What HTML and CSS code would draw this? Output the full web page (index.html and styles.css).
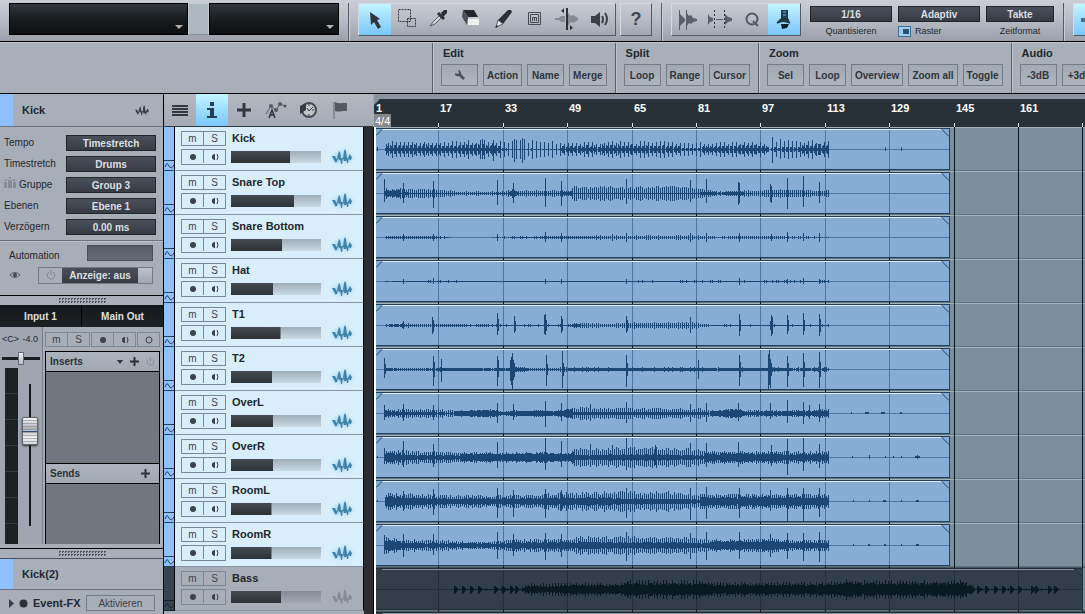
FILE: index.html
```html
<!DOCTYPE html>
<html lang="de">
<head>
    <meta charset="UTF-8">
    <meta name="viewport" content="width=device-width, initial-scale=1.0">
    <title>Kick</title>
    <link rel="stylesheet" href="styles.css">
</head>
<body>
    <!-- Shared icons -->
    <svg class="symbols" width="0" height="0">
        <symbol id="i-wave" viewBox="0 0 20 16">
            <path d="M0 7h3l1 2 1 3-1 2-2-3zM5 9l1-4 1-3 1 1 1 5-1 3H7L6 9l-1 4-1-1zM8 9h3l-1 6H9zM11 9l1-7 1-2 1 2 1 7-1 3h-2zM14 9h3l-1 5h-1zM17 7l1-2 1 2 1 1-1 3h-1l-2-2z" fill="currentColor"/>
        </symbol>
        <symbol id="i-rec" viewBox="0 0 12 10"><circle cx="6" cy="5" r="3" fill="currentColor"/></symbol>
        <symbol id="i-mon" viewBox="0 0 12 10">
            <path d="M6 2v6H5L3 6.500v-3L5 2z" fill="currentColor"/>
            <path d="M8 2q2 3 0 6" fill="none" stroke="currentColor"/>
        </symbol>
        <symbol id="i-power" viewBox="0 0 10 10">
            <path d="M3 2.200a3.700 3.700 0 1 0 4 0M5 0v5" fill="none" stroke="currentColor"/>
        </symbol>
        <symbol id="i-plus" viewBox="0 0 14 14"><path d="M5.500 0h3v5.500H14v3H8.500V14h-3V8.500H0v-3h5.500z" fill="currentColor"/></symbol>
        <symbol id="i-env" viewBox="0 0 10 9"><path d="M1 6q2-6 4-1 2 4 5-1" fill="none" stroke="currentColor"/></symbol>
    </svg>

    <header class="toolbar">
        <div class="display display-wide"><select aria-label="Parameter"></select></div>
        <div class="display-link"></div>
        <div class="display"><select aria-label="Wert"></select></div>
        <div class="separator"></div>

        <div class="tools">
            <button class="tool active" aria-label="Pfeil">
                <svg width="32" height="31"><path d="M11 8l1 13 3-3 4 7 3-2-4-7 3-1z" fill="#303439"/></svg>
            </button>
            <button class="tool" aria-label="Bereich">
                <svg width="32" height="31" fill="none" stroke="#303439" stroke-dasharray="2 1"><path d="M7.500 5.500h12v12h-12zM16.500 14.500h8v8h-8z"/></svg>
            </button>
            <button class="tool" aria-label="Trennen">
                <svg width="32" height="31"><path d="M18 9l3-3h3v3l-4 4z" fill="#2c3034"/><path d="M15 9l6 6" stroke="#2c3034" stroke-width="3"/><path d="M16 12l-6 6-3 4 5-2 6-6z" fill="#d5d8dd" stroke="#555b62"/></svg>
            </button>
            <button class="tool" aria-label="Radiergummi">
                <svg width="32" height="31"><path d="M8 6h11l4 7H13z" fill="#23272b"/><path d="M8 6l5 7-1 8-5-8z" fill="#4a4f55"/><path d="M13 15h11v6H13z" fill="#f0f0ef"/><path d="M13 15l2-2h8l1 2z" fill="#c8cbcf"/></svg>
            </button>
            <button class="tool" aria-label="Stift">
                <svg width="32" height="31"><path d="M11 16L21 6h3l1 2-9 12z" fill="#2d3136"/><path d="M11 16l5 4-7 3z" fill="#e4e6e9" stroke="#555b61"/><path d="M8 24l3-1-1-2z" fill="#222"/></svg>
            </button>
            <button class="tool" aria-label="Mute">
                <svg width="32" height="31" fill="none" stroke="#464c54"><path d="M9.500 8.500h12v12h-12zM11.500 10.500h8v8h-8z"/><path d="M13.500 17v-3.500h4V17M15.500 14v3"/></svg>
            </button>
            <button class="tool" aria-label="Bend">
                <svg width="32" height="31"><path d="M4 14h4l2-2h4v6h-4l-2-2H4z" fill="#868c94"/><path d="M17 9l3 3 2-1 5 3v2l-5 3-2-1-3 4z" fill="#868c94"/><path d="M15 4h2v22h-2z" fill="#2d3136"/><path d="M13 4v5l-3-2zM19 21v5l3-2z" fill="#2d3136"/></svg>
            </button>
            <button class="tool" aria-label="Hören">
                <svg width="32" height="31"><path d="M8 12h4l5-4v15l-5-4H8z" fill="#3b4047"/><path d="M19 12q2 3 0 7M22 9q4 6 0 12" fill="none" stroke="#3b4047" stroke-width="2"/></svg>
            </button>
        </div>
        <button class="tool-help">?</button>
        <div class="separator"></div>

        <div class="tools">
            <button class="tool" aria-label="Transienten">
                <svg width="32" height="31"><path d="M8 10l5 5v2l-5 5zM15 9l2 3 2-1 2 3 4 1v2l-4 1-2 2-2-1-2 3z" fill="#596069"/><path d="M7.500 6v20M14.500 6v20" stroke="#596069"/></svg>
            </button>
            <button class="tool" aria-label="Auto-Crossfade">
                <svg width="32" height="31"><path d="M4 10l2 3 3 1v3l-3 1-2 3zM12 15h7v1h-7zM21 10l3 3 4 1v3l-4 1-3 3z" fill="#596069"/><path d="M10.500 6v20M20.500 6v20" stroke="#303439" stroke-dasharray="2 2"/></svg>
            </button>
            <button class="tool" aria-label="Quantisierung">
                <svg width="32" height="31" fill="none" stroke="#555b63" stroke-width="2"><circle cx="16" cy="15" r="5.500"/><path d="M17 17l5 5"/></svg>
            </button>
            <button class="tool active" aria-label="Autoscroll">
                <svg width="32" height="31"><path d="M13 6h7v8h-7z" fill="#1c3d57"/><path d="M15 8h3M15 11h3" stroke="#79bbdf"/><path d="M9 18l4-4h7l2 4-6-2z" fill="#234"/><path d="M9 19q6-4 13 0" stroke="#234" fill="none" stroke-width="2"/><path d="M13 20h8l-2 4-5 1z" fill="#0e1e2d"/></svg>
            </button>
        </div>

        <div class="field field-first">
            <select id="quant"><option>1/16</option></select>
            <label for="quant">Quantisieren</label>
        </div>
        <div class="field">
            <select aria-label="Rastermodus"><option>Adaptiv</option></select>
            <label class="snap"><input type="checkbox" checked>Raster</label>
        </div>
        <div class="field field-small">
            <select id="format"><option>Takte</option></select>
            <label for="format">Zeitformat</label>
        </div>
        <div class="separator"></div>
        <div class="tools">
            <button class="tool active" aria-label="Start">
                <svg width="32" height="31"><path d="M7 14h20v4H7z" fill="#47708c"/></svg>
            </button>
        </div>
    </header>

    <div class="macros">
        <div class="macro-blank"></div>
        <section class="macro">
            <h2>Edit</h2>
            <div class="macro-buttons">
                <button aria-label="Setup"><svg width="12" height="12"><path d="M4 1l1 3-1 1-3-1q0 4 4 3l4 4 2-2-4-4q0-4-3-4z" fill="#4a5058"/></svg></button>
                <button>Action</button>
                <button>Name</button>
                <button>Merge</button>
            </div>
        </section>
        <section class="macro">
            <h2>Split</h2>
            <div class="macro-buttons">
                <button>Loop</button>
                <button>Range</button>
                <button>Cursor</button>
            </div>
        </section>
        <section class="macro">
            <h2>Zoom</h2>
            <div class="macro-buttons">
                <button>Sel</button>
                <button>Loop</button>
                <button>Overview</button>
                <button>Zoom all</button>
                <button>Toggle</button>
            </div>
        </section>
        <section class="macro">
            <h2>Audio</h2>
            <div class="macro-buttons">
                <button>-3dB</button>
                <button>+3dB</button>
            </div>
        </section>
    </div>

    <main class="workspace">
        <aside class="inspector">
            <div class="ins-title">
                <span class="swatch"></span>
                <h1>Kick</h1>
                <svg class="ins-wave" width="14" height="11"><use href="#i-wave"/></svg>
            </div>

            <div class="params">
                <label for="tempo">Tempo</label>
                <select id="tempo"><option>Timestretch</option></select>
                <label for="stretch">Timestretch</label>
                <select id="stretch"><option>Drums</option></select>
                <label for="group"><svg width="12" height="11" fill="#858c96"><path d="M0 5h3v6H0zM4 3h4v8H4zM9 5h3v6H9zM1 2h2v2H1zM5 0h2v2H5zM9 2h2v2H9z"/></svg> Gruppe</label>
                <select id="group"><option>Group 3</option></select>
                <label for="layer">Ebenen</label>
                <select id="layer"><option>Ebene 1</option></select>
                <label for="delay">Verzögern</label>
                <input id="delay" type="text" value="0.00 ms">
            </div>

            <div class="automation">
                <div class="auto-row">
                    <label for="auto">Automation</label>
                    <select id="auto"></select>
                </div>
                <div class="auto-row">
                    <svg class="eye" width="12" height="8"><path d="M1 4q5-5 10 0q-5 5-10 0z" fill="none" stroke="#555b63"/><circle cx="6" cy="4" r="2" fill="#444a52"/></svg>
                    <div class="show">
                        <button class="show-power" aria-label="Automation an"><svg width="10" height="10"><use href="#i-power"/></svg></button>
                        <select aria-label="Anzeige"><option>Anzeige: aus</option></select>
                        <span class="show-end"></span>
                    </div>
                </div>
            </div>

            <div class="grip"></div>
            <div class="routing">
                <button>Input 1</button>
                <button>Main Out</button>
            </div>

            <div class="channel">
                <div class="strip">
                    <div class="levels"><span>&lt;C&gt;</span><span>-4.0</span></div>
                    <input class="pan" type="range" aria-label="Panorama">
                    <div class="fader-row">
                        <div class="meter"></div>
                        <input class="fader" type="range" aria-label="Pegel" value="71">
                    </div>
                </div>
                <div class="racks">
                    <div class="ch-buttons">
                        <div class="pair"><button>m</button><button>S</button></div>
                        <div class="pair">
                            <button aria-label="Aufnahme"><svg width="12" height="10"><use href="#i-rec"/></svg></button>
                            <button aria-label="Monitor"><svg width="12" height="10"><use href="#i-mon"/></svg></button>
                        </div>
                        <div class="pair">
                            <button aria-label="Mono"><svg width="10" height="10" fill="none" stroke="currentColor"><circle cx="5" cy="5" r="3"/></svg></button>
                        </div>
                    </div>
                    <div class="rack">
                        <div class="rack-head">
                            <h3>Inserts</h3>
                            <svg width="6" height="4"><path d="M0 0h6L3 4z" fill="#2c3138"/></svg>
                            <svg width="9" height="9"><use href="#i-plus"/></svg>
                            <svg class="dim" width="9" height="9"><use href="#i-power"/></svg>
                        </div>
                        <div class="rack-body rack-inserts"></div>
                        <div class="rack-head rack-sends">
                            <h3>Sends</h3>
                            <svg width="9" height="9"><use href="#i-plus"/></svg>
                        </div>
                        <div class="rack-body"></div>
                    </div>
                </div>
            </div>

            <div class="grip"></div>
            <div class="ins-title ins-event">
                <span class="swatch"></span>
                <h1>Kick(2)</h1>
            </div>
            <div class="event-fx">
                <svg width="5" height="9"><path d="M0 0l5 4.500L0 9z" fill="#363c44"/></svg>
                <svg width="9" height="9"><circle cx="4.500" cy="4.500" r="4" fill="#2d3239"/></svg>
                <h3>Event-FX</h3>
                <button>Aktivieren</button>
            </div>
        </aside>

        <div class="tracks">
            <div class="track-tools">
                <button aria-label="Spurliste"><svg width="16" height="11" fill="#34393f"><path d="M0 0h16v2H0zM0 3h16v2H0zM0 6h16v2H0zM0 9h16v2H0z"/></svg></button>
                <button class="active" aria-label="Inspektor"><svg width="10" height="16" fill="#263d50"><path d="M3 0h4v4H3zM0 6h7v8h3v2H0v-2h3V8H0z"/></svg></button>
                <button aria-label="Spur hinzufügen"><svg width="14" height="14" color="#34393f"><use href="#i-plus"/></svg></button>
                <button aria-label="Automation"><svg width="22" height="18"><path d="M1 13l5-8 5 4 4-6 5 2" fill="none" stroke="#555b63"/><circle cx="6" cy="5" r="2" fill="#555b63"/><circle cx="11" cy="9" r="2" fill="#555b63"/><circle cx="15" cy="3" r="2" fill="#555b63"/><circle cx="20" cy="5" r="1.500" fill="#555b63"/><path d="M4 17l3-8 3 8M5 14h4" fill="none" stroke="#30353b" stroke-width="1.500"/></svg></button>
                <button aria-label="Tempo"><svg width="18" height="18"><circle cx="10" cy="9" r="7" fill="#c3c7cc" stroke="#454a50" stroke-width="2"/><path d="M7 2L1 5v8l6-4z" fill="#353a40"/><path d="M10 3v2M10 13v2M15 9h-2M10 10l4-4M8 7l2 3" stroke="#353a40" fill="none"/></svg></button>
                <button aria-label="Marker"><svg width="14" height="18"><path d="M1 1v17" stroke="#868c93" stroke-width="2"/><path d="M2 1q4 2 7 1h5v8H9q-3 1-7 0z" fill="#555a61"/></svg></button>
            </div>
            <div id="trackList"></div>
        </div>

        <div class="gutter"></div>

        <div class="arrangement">
            <svg id="ruler" class="ruler"></svg>
            <div id="lanes" class="lanes"></div>
        </div>
    </main>

    <script src="script.js"></script>
</body>
</html>
```

FILE: styles.css
```css
* {
    box-sizing: border-box;
}

body {
    margin: 0;
    height: 100vh;
    display: flex;
    flex-direction: column;
    overflow: hidden;
    background: #a8aeb8;
    color: #22272d;
    font-family: Arial, "Liberation Sans", sans-serif;
    font-size: 10px;
}

h1, h2, h3 {
    margin: 0;
    font-size: 11px;
    line-height: 14px;
}

h3 {
    font-size: 10px;
}

button, select, input {
    margin: 0;
    padding: 0;
    border: 0;
    border-radius: 0;
    background: none;
    color: inherit;
    font: inherit;
    appearance: none;
}

button {
    display: flex;
    align-items: center;
    justify-content: center;
}

svg {
    display: block;
    flex: none;
}

.symbols {
    position: absolute;
}

/* Top toolbar */
.toolbar {
    display: flex;
    flex: none;
    height: 42px;
    padding: 3px 0 0 9px;
    border-bottom: 1px solid #000;
    background: linear-gradient(#cacdd5, #b9bdc7 45%, #9ba0aa);
}

.toolbar > * {
    flex: none;
}

.display {
    position: relative;
    width: 130px;
    height: 32px;
    border: 1px solid #000;
    background: linear-gradient(#32383d, #1b1f22 45%, #0d0f10);
}

.display-wide {
    width: 179px;
}

.display select {
    width: 100%;
    height: 100%;
}

.display::after {
    content: "";
    position: absolute;
    right: 4px;
    bottom: 5px;
    border: 4px solid transparent;
    border-top-color: #aeb2b5;
    border-bottom: 0;
}

.display-link {
    width: 21px;
    height: 32px;
    border: 1px solid #c6cad1;
    border-bottom-color: #888e97;
    background: #adb8c1;
}

.separator {
    width: 2px;
    height: 38px;
    margin: 0 8px 0 9px;
    border-left: 1px solid #595e66;
    border-right: 1px solid #c8ccd2;
}

.tools {
    display: flex;
    height: 33px;
    border: 1px solid #d6d9de;
    border-right-color: #555a62;
    border-bottom-color: #555a62;
}

.tool {
    width: 32px;
    height: 31px;
}

.tool.active,
.track-tools .active {
    background: linear-gradient(#c3f5ff, #9edcff 50%, #7bc6fc);
}

.tool-help {
    width: 32px;
    height: 33px;
    margin-left: 4px;
    border: 1px solid #d6d9de;
    border-right-color: #555a62;
    border-bottom-color: #555a62;
    color: #41464d;
    font-size: 18px;
    font-weight: bold;
}

.field {
    width: 82px;
    margin-left: 6px;
    padding-top: 3px;
    text-align: center;
}

.field-first {
    margin-left: 9px;
}

.field-small {
    width: 68px;
}

.field select,
.params select,
.params input,
.show select {
    display: block;
    width: 100%;
    height: 16px;
    border: 1px solid #22262b;
    background: linear-gradient(#4a505a, #363b44);
    color: #dcdfe2;
    font-weight: bold;
    text-align: center;
    text-align-last: center;
}

.field label {
    display: block;
    margin-top: 3px;
    font-size: 9px;
    line-height: 12px;
}

.field .snap {
    display: flex;
    align-items: center;
    gap: 4px;
}

.snap input {
    width: 13px;
    height: 11px;
    border: 1px solid #3d7195;
    background: linear-gradient(#275575, #275575) 4px 2px / 6px 5px no-repeat, #9dcdec;
}

/* Macro bar */
.macros {
    display: flex;
    flex: none;
    height: 52px;
    border-top: 1px solid #c3c7cf;
    border-bottom: 1px solid #000;
    background: #a8afb9;
}

.macro-blank {
    flex: 0 0 432px;
}

.macro {
    flex: none;
    padding: 3px 8px 0;
    border-left: 1px solid #595f68;
    box-shadow: inset 1px 0 #bfc4cb;
}

.macro h2 {
    padding-left: 2px;
}

.macro-buttons {
    display: flex;
    gap: 5px;
    margin-top: 4px;
}

.macro-buttons button {
    min-width: 37px;
    height: 22px;
    padding: 0 3px;
    border: 1px solid #757c86;
    background: linear-gradient(#a3a9b3, #afb5bf);
    color: #30353c;
    font-weight: bold;
}

/* Workspace */
.workspace {
    display: flex;
    flex: 1;
    min-height: 0;
}

.inspector {
    display: flex;
    flex: none;
    flex-direction: column;
    width: 164px;
    border-right: 1px solid #000;
}

.inspector > * {
    flex: none;
}

.ins-title {
    display: flex;
    align-items: center;
    height: 33px;
    border-bottom: 1px solid #6a717b;
    background: #a9afb9;
}

.swatch {
    width: 13px;
    height: 100%;
    margin-right: 9px;
    background: #90c1ff;
}

.ins-wave {
    margin-left: auto;
    margin-right: 14px;
    color: #363c44;
}

.params {
    display: grid;
    grid-template-columns: 1fr 90px;
    row-gap: 5px;
    align-items: center;
    padding: 8px 7px 5px 4px;
}

.params label {
    display: flex;
    gap: 3px;
    line-height: 16px;
}

.automation {
    height: 55px;
    padding: 4px 10px 0 9px;
    border-top: 1px solid #69707a;
    box-shadow: inset 0 1px #bcc1c8;
}

.auto-row {
    display: flex;
    align-items: center;
    justify-content: space-between;
    height: 20px;
}

.auto-row > select {
    width: 66px;
    height: 16px;
    margin-bottom: 4px;
    border: 1px solid #484e57;
    background: linear-gradient(#555b64, #666c76);
}

.show {
    display: flex;
    height: 17px;
    border: 1px solid #737a84;
}

.show-power {
    width: 23px;
    color: #7c838d;
}

.show select {
    width: 76px;
    height: 15px;
    border: 0;
}

.show-end {
    width: 14px;
    background: linear-gradient(#bcc1ca, #9fa6b0);
}

.grip {
    height: 10px;
    border-top: 1px solid #000;
    background: #a9afb9;
}

.grip::after {
    content: "";
    display: block;
    width: 48px;
    height: 6px;
    margin: 2px auto 0;
    background: conic-gradient(#4a5058 25%, transparent 0) 0 0 / 3px 3px;
}

.routing {
    display: flex;
    gap: 1px;
    height: 22px;
    background: #000;
}

.routing button {
    flex: 1;
    background: linear-gradient(#15191b, #1c2123);
    color: #dde0e2;
    font-weight: bold;
}

.inspector > .channel {
    display: flex;
    flex: 1;
    min-height: 0;
    padding-bottom: 4px;
}

.strip {
    display: flex;
    flex-direction: column;
    width: 43px;
    border-right: 1px solid #757c86;
    background: #9fa6b1;
}

.levels {
    display: flex;
    justify-content: space-between;
    padding: 6px 4px 0 2px;
    font-size: 9px;
    line-height: 12px;
}

.pan {
    width: 38px;
    height: 13px;
    margin: 7px 0 3px 2px;
    background: linear-gradient(#1c2023, #1c2023) 0 5px / 100% 3px no-repeat;
}

.pan::-webkit-slider-thumb {
    width: 6px;
    height: 13px;
    border: 1px solid #636a73;
    background: linear-gradient(#f0f0f2, #b5b9bf);
    appearance: none;
}

.fader-row {
    display: flex;
    flex: 1;
    min-height: 0;
}

.meter {
    width: 13px;
    margin: 0 4px 0 5px;
    background: repeating-linear-gradient(#1c2224 0 25px, #343b3e 25px 26px);
}

.fader {
    width: 16px;
    height: 142px;
    margin-top: 16px;
    writing-mode: vertical-lr;
    direction: rtl;
    background: linear-gradient(#14171a, #14171a) 7px 0 / 2px 100% no-repeat;
}

.fader::-webkit-slider-thumb {
    width: 16px;
    height: 28px;
    border: 1px solid #60666e;
    border-radius: 2px;
    background:
        linear-gradient(#2d4c7c, #2d4c7c) 0 13px / 100% 1px no-repeat,
        repeating-linear-gradient(#fff0 0 2px, #70757d80 2px 3px),
        linear-gradient(#f4f4f6, #b1b5ba 40%, #f1f1f3 75%, #dadcdf);
    box-shadow: 0 1px 2px #333;
    appearance: none;
}

.racks {
    display: flex;
    flex: 1;
    flex-direction: column;
    min-width: 0;
    padding: 5px 3px 0 2px;
}

.ch-buttons {
    display: flex;
    gap: 1px;
    margin-bottom: 4px;
}

.pair {
    display: flex;
    flex: none;
    border: 1px solid #7c8894;
    color: #3c434a;
}

.pair button {
    width: 21px;
    height: 13px;
}

.pair button + button {
    width: 22px;
    border-left: 1px solid #7c8894;
}

.ch-buttons .pair:last-child {
    flex: 1;
    justify-content: center;
}

.rack {
    display: flex;
    flex: 1;
    flex-direction: column;
    min-height: 0;
    border: 1px solid #000;
    border-bottom: 0;
}

.rack-head {
    display: flex;
    align-items: center;
    gap: 7px;
    height: 20px;
    padding: 0 4px;
    border-bottom: 1px solid #000;
    background: linear-gradient(#adb3bd, #a2a8b2);
    color: #2c3138;
}

.rack-head h3 {
    margin-right: auto;
}

.rack-sends {
    height: 21px;
    padding-right: 9px;
    border-top: 1px solid #000;
}

.dim {
    color: #838a94;
}

.rack-body {
    flex: 1;
    background: #72787f;
}

.rack-inserts {
    flex: 0 0 91px;
}

.ins-event {
    height: 32px;
    border-top: 1px solid #4c5259;
}

.event-fx {
    display: flex;
    align-items: center;
    gap: 5px;
    height: 24px;
    padding: 2px 8px 0 9px;
}

.event-fx h3 {
    font-size: 11px;
}

.event-fx button {
    flex: 1;
    height: 16px;
    border: 1px solid #757c86;
    color: #3b4148;
}

/* Track list */
.tracks {
    flex: none;
    width: 200px;
    background: #a8aeb8;
}

.track-tools {
    display: flex;
    width: 209px;
    height: 33px;
    border-bottom: 1px solid #33383d;
    background: linear-gradient(#b2b7c0, #a5abb5);
}

.track-tools button {
    width: 32px;
}

.track {
    display: flex;
    height: 44px;
    background: #d8effb;
}

.track-auto {
    display: flex;
    flex-direction: column;
    justify-content: flex-end;
    width: 11px;
    border-right: 1px solid #000;
    background: #90c1ff;
    color: #24425f;
}

.track-auto svg {
    width: 10px;
    height: 11px;
    border-top: 1px solid currentColor;
    border-bottom: 1px solid currentColor;
}

.track-main {
    display: grid;
    flex: 1;
    grid-template-columns: 45px 90px 1fr;
    column-gap: 5px;
    row-gap: 3px;
    align-content: start;
    padding: 4px 0 0 6px;
    border-right: 1px solid #000;
    border-bottom: 1px solid #86959f;
}

.track h2 {
    grid-column: 2 / 4;
    padding-left: 1px;
}

.volume {
    align-self: center;
    width: 90px;
    height: 12px;
    background:
        linear-gradient(#454b50, #2c3136) 0 0 / var(--level) 100% no-repeat,
        linear-gradient(#9fadb6, #c9dae4);
}

.volume::-webkit-slider-thumb {
    width: 1px;
    height: 12px;
    appearance: none;
}

.track-icon {
    margin-left: 6px;
    color: #4382ab;
    filter: drop-shadow(0 0 2px #8fcdf0);
}

.track.off {
    background: #a8aeb8;
}

.track.off .track-auto {
    background: #34464f;
    color: #14222a;
}

.track.off .volume {
    background:
        linear-gradient(#454b50, #2c3136) 0 0 / var(--level) 100% no-repeat,
        linear-gradient(#858b94, #a2a8b1);
}

.track.off .track-icon {
    color: #858b94;
    filter: none;
}

.gutter {
    flex: none;
    width: 10px;
    margin-top: 33px;
    border-right: 1px solid #000;
    background: #2a2c31;
}

/* Arrangement */
.arrangement {
    display: flex;
    flex: 1;
    flex-direction: column;
    min-width: 0;
}

.ruler {
    width: 100%;
    height: 33px;
    border-top: 5px solid #8994a0;
    background: #283137;
    font-size: 11px;
    font-weight: bold;
}

.ruler .signature {
    font-weight: normal;
}

.lanes {
    flex: 1;
    min-height: 0;
    overflow: hidden;
    border-left: 2px solid #fff;
    background: #7b909c;
}

.lane {
    width: 100%;
    height: 44px;
    shape-rendering: crispEdges;
}

.lane-line { fill: #5f7380; }
.lane-light { fill: #a3b4be; }
.bar { fill: #10181d; }
.event { fill: #88add4; stroke: #23415e; }
.event-top { fill: #e4eef8; }
.event-bar { fill: #4d76a4; }
.fade { fill: none; stroke: #23415e; shape-rendering: auto; }
.wave { fill: none; stroke: #1c4774; }

.dark .event { fill: #323f4a; stroke: #222d35; }
.dark .event-top { fill: #87939c; }
.dark .event-bar { fill: #22303a; }
.dark .fade { stroke: #26323b; }
.dark .wave { stroke: #0a1a22; }
.dark .lane-light { fill: #46545e; }
```

FILE: script.js
```javascript
// Timeline: 16 bars are 64.4px wide
const STEP = 64.4;
const ORIGIN = 376;

// env: [x, amplitude, fill between beats], spikes: [x, up, down], dots: quiet hits
const tracks = [
    { name: 'Kick', level: 66, beat: 4,
      env: [[385,8,.6],[430,8,.6],[440,8,.5],[460,9,.6],[490,9,.5],[500,8,.2],[508,6,.1],[513,10,.1],[535,9,.1],[560,7,.5],[600,8,.6],[640,8,.5],[680,7,.2],[700,7,.5],[740,8,.6],[765,7,.6],[768,3,.2],[772,9,.3],[800,9,.6],[829,8,.5]],
      spikes: [[482,10,9],[493,9,11],[514,10,12],[522,11,13],[772,12,13],[780,10,9],[812,9,9]], dots: [[377,2],[885,2],[901,2]] },
    { name: 'Snare Top', level: 70, beat: 2,
      env: [[385,5,.7],[395,4,.7],[400,5,.2],[440,4,.2],[452,3,.2],[458,2,.2],[500,2,.3],[511,4,.6],[514,4,.6],[518,3,.2],[560,3,.6],[570,3,.6],[573,7,.1],[600,7,.1],[690,7,.1],[700,4,.4],[712,4,.4],[718,2,.6],[738,3,.7],[745,3,.1],[775,4,.1],[829,3,.2]],
      spikes: [[384,14,8],[403,10,9],[433,12,14],[497,13,11],[513,10,9],[545,15,13],[561,12,12],[626,14,10],[690,13,8],[706,14,9],[738,11,11],[739,10,9],[770,9,8],[771,7,9],[787,15,15],[803,17,13],[819,11,9]] },
    { name: 'Snare Bottom', level: 57, beat: 2,
      env: [[385,1.5,.5],[430,1.5,.3],[450,1,0],[453,0,0],[490,0,0],[496,1,0],[510,1,.5],[565,1.5,.3],[600,2,.1],[700,2,.1],[715,1,.1],[738,1.5,.2],[829,1,.2]],
      spikes: [[403,3,3],[433,3,3],[497,3,3],[545,5,4],[561,4,4],[612,3,3],[626,4,4],[690,4,4],[706,4,4],[739,4,4],[771,3,3],[787,5,4],[803,4,3],[819,4,4]] },
    { name: 'Hat', level: 47, beat: 2,
      env: [[385,.6,.6],[430,1,.5],[500,.8,.7],[700,1,.5],[829,1,.5]],
      spikes: [[403,2,2],[433,3,2],[545,2,2],[561,2,2],[626,2,2],[739,3,3],[787,2,2],[803,3,2],[819,2,2]] },
    { name: 'T1', level: 55, beat: 2,
      env: [[385,1,.8],[403,2,.2],[440,1.5,.4],[500,1,.7],[565,1,.5],[580,3,.1],[610,2,.1],[635,3,.1],[695,3,.1],[710,1,.8],[829,1,.6]],
      spikes: [[403,4,3],[432,8,8],[433,5,6],[497,12,9],[498,6,5],[514,9,7],[515,4,5],[544,10,8],[545,11,9],[546,5,5],[561,9,7],[562,6,5],[626,9,7],[627,5,5],[690,8,7],[739,11,10],[740,5,5],[771,10,10],[772,8,8],[770,4,4],[787,10,8],[788,5,5],[803,12,9],[804,5,5],[819,11,10],[820,6,6]] },
    { name: 'T2', level: 46, beat: 2,
      env: [[385,2,.7],[398,1.5,.5],[436,2,.7],[500,1.5,.9],[508,1.5,.9],[516,3,.7],[530,1.5,.5],[570,2,.8],[700,2,.7],[765,2,.7],[775,2,.6],[829,2,.8]],
      spikes: [[384,11,8],[385,5,4],[433,13,16],[434,7,7],[441,10,12],[497,13,16],[498,9,7],[510,9,11],[511,12,15],[512,16,19],[513,9,10],[514,6,7],[546,14,16],[547,5,5],[562,18,18],[563,6,6],[626,14,17],[627,6,6],[698,9,9],[739,14,16],[740,7,7],[768,15,19],[769,19,15],[770,10,18],[771,6,6],[787,13,17],[788,6,6],[803,16,17],[804,7,7],[819,17,18],[820,7,7]] },
    { name: 'OverL', level: 47, beat: 2,
      env: [[385,5,.6],[395,4,.5],[400,5,.3],[445,4,.3],[455,3,.9],[495,4,.9],[500,2,.8],[515,3,.9],[560,3,.9],[573,6,.3],[700,5,.3],[710,3,.9],[738,5,.8],[745,3,.7],[829,4,.7]],
      spikes: [[384,8,6],[403,9,7],[433,8,6],[497,10,9],[513,9,6],[545,12,13],[561,10,7],[590,9,7],[626,11,9],[690,9,8],[706,10,8],[738,10,7],[770,10,5],[787,13,9],[803,11,10],[809,8,5],[819,9,8]], dots: [[851,1],[865,1],[866,1],[867,1],[868,1],[881,1],[882,1],[883,1],[884,1],[900,1],[901,1]] },
    { name: 'OverR', level: 47, beat: 2,
      env: [[385,7,.6],[400,7,.4],[445,6,.5],[460,5,.8],[510,5,.9],[545,5,.9],[570,4,.8],[575,9,.3],[640,10,.3],[690,9,.3],[705,6,.7],[740,6,.7],[780,6,.6],[829,6,.7]],
      spikes: [[384,9,6],[403,16,9],[433,13,9],[497,15,10],[545,19,12],[561,16,9],[590,13,9],[612,12,7],[626,19,12],[655,12,7],[690,14,9],[706,14,9],[738,15,9],[771,12,8],[787,18,17],[803,19,13],[819,13,10]], dots: [[377,1],[852,1],[869,2],[885,1],[893,1],[901,1],[915,1],[916,1],[917,2],[918,1],[919,1]] },
    { name: 'RoomL', level: 45, beat: 2,
      env: [[385,9,.6],[400,8,.5],[460,6,.5],[490,6,.5],[540,7,.5],[570,9,.4],[620,10,.3],[680,9,.3],[700,8,.6],[740,7,.7],[770,7,.6],[829,7,.6]],
      spikes: [[403,10,9],[433,12,13],[497,13,16],[513,11,15],[545,12,16],[561,11,9],[626,13,16],[690,13,18],[706,14,17],[739,13,16],[770,11,9],[787,13,19],[803,13,19],[819,13,15]], dots: [[377,1],[853,1],[869,1],[883,1],[884,1],[885,1],[901,1],[916,1],[917,1],[918,1]] },
    { name: 'RoomR', level: 45, beat: 2,
      env: [[385,8,.7],[400,6,.5],[450,5,.5],[460,4,.7],[490,4,.5],[515,6,.6],[570,6,.5],[580,9,.4],[690,8,.4],[710,6,.7],[740,6,.7],[770,7,.7],[780,6,.6],[829,5,.7]],
      spikes: [[384,10,8],[403,11,11],[433,11,9],[497,13,13],[513,11,10],[545,12,14],[561,11,11],[626,13,15],[690,12,13],[706,13,14],[739,13,13],[770,11,11],[787,12,13],[803,12,15],[819,13,16]], dots: [[853,1],[868,1],[869,1],[884,1],[885,1],[901,1],[916,1],[917,1],[918,1]] },
    { name: 'Bass', level: 56, beat: 3, off: true, end: 1082,
      env: [[454,1,.8],[520,1,.5],[527,6,.6],[560,6,.7],[580,7,.7],[620,6,.8],[630,9,.7],[700,9,.7],[720,7,.7],[760,7,.7],[830,8,.7],[850,10,.7],[890,9,.7],[960,9,.8],[972,5,.7],[975,1,.5],[1060,1,.5]],
      spikes: [454,462,470,478,494,502,510,515,977,985,994,1002,1010,1018,1031,1035,1048,1054].flatMap(x => [[x,3,4],[x+1,3,3],[x+2,2,2],[x+3,1,1]]) }
];

let seed = 7;
function random() {
    seed = (seed * 16807) % 2147483647;
    return seed / 2147483647;
}

function wavePath(track) {
    const env = track.env || [];
    let d = '';
    function bar(x, up, down) {
        d += `M${x - ORIGIN + 0.5} ${22 - Math.round(up)}V${23 + Math.round(down)}`;
    }
    for (let i = 0; i < env.length - 1; i++) {
        const [x0, a0, f] = env[i];
        const [x1, a1] = env[i + 1];
        for (let x = x0; x < x1; x++) {
            let amp = a0 + (a1 - a0) * (x - x0) / (x1 - x0);
            amp *= 0.7 + random() * 0.4;
            if (x % track.beat) {
                amp *= f * (track.beat === 4 && x % 4 === 1 ? 0.3 : 1);
            }
            if (amp > 0.3) bar(x, amp - 0.5, amp - 0.5);
        }
    }
    (track.spikes || []).forEach(([x, up, down]) => bar(x, up, down));
    (track.dots || []).forEach(([x, amp]) => bar(x, amp, amp - 1));
    return d;
}

function lane(track) {
    const end = (track.end || 949) - ORIGIN;
    let bars = '';
    let eventBars = '';
    for (let i = 1; i < 40; i++) {
        const x = Math.round(374 + i * STEP) - ORIGIN;
        bars += `<rect class="bar" x="${x}" y="0" width="1" height="44"/>`;
        if (x < end) eventBars += `<rect class="event-bar" x="${x}" y="3" width="1" height="39"/>`;
    }
    return `
        <svg class="lane ${track.off ? 'dark' : ''}">
            <rect class="lane-light" x="0" y="0" width="100%" height="1"/>
            <rect class="lane-line" x="0" y="43" width="100%" height="1"/>
            ${bars}
            <rect class="event" x="-1.5" y="1.5" width="${end + 2}" height="41"/>
            <rect class="event-top" x="6" y="2" width="${end - 14}" height="1"/>
            ${eventBars}
            <rect class="event-bar" x="0" y="22" width="${end}" height="1"/>
            <path class="fade" d="M0 8.500L6 2.500M${end - 7} 2.500L${end} 9.500"/>
            <path class="wave" d="${wavePath(track)}"/>
        </svg>`;
}

function header(track) {
    return `
        <div class="track ${track.off ? 'off' : ''}">
            <div class="track-auto"><svg><use href="#i-env"/></svg></div>
            <div class="track-main">
                <div class="pair"><button>m</button><button>S</button></div>
                <h2>${track.name}</h2>
                <div class="pair">
                    <button aria-label="Aufnahme"><svg width="12" height="10"><use href="#i-rec"/></svg></button>
                    <button aria-label="Monitor"><svg width="12" height="10"><use href="#i-mon"/></svg></button>
                </div>
                <input class="volume" type="range" aria-label="${track.name}" value="${track.level}" style="--level: ${track.level}%">
                <svg class="track-icon" width="20" height="16"><use href="#i-wave"/></svg>
            </div>
        </div>`;
}

// Labels that would not fit at the right edge are left out
function ruler(width) {
    let out = '<path d="M0 0h6L0 6z" fill="#8994a0"/><rect x="0" y="15" width="17" height="13" fill="#85898b"/><text class="signature" x="1" y="26" fill="#fff">4/4</text>';
    for (let i = 0; i * STEP < width; i++) {
        const x = Math.round(i * STEP);
        if (i) out += `<rect x="${x}" y="24" width="1" height="4" fill="#dfe3e6"/>`;
        if (x + 24 < width) out += `<text x="${x + 2}" y="13" fill="#fff">${i * 16 + 1}</text>`;
    }
    return out;
}

const rulerEl = document.getElementById('ruler');
rulerEl.innerHTML = ruler(rulerEl.getBoundingClientRect().width);
document.getElementById('trackList').innerHTML = tracks.map(header).join('');
document.getElementById('lanes').innerHTML = tracks.map(lane).join('') + lane({ off: true, end: 1300 });
```
